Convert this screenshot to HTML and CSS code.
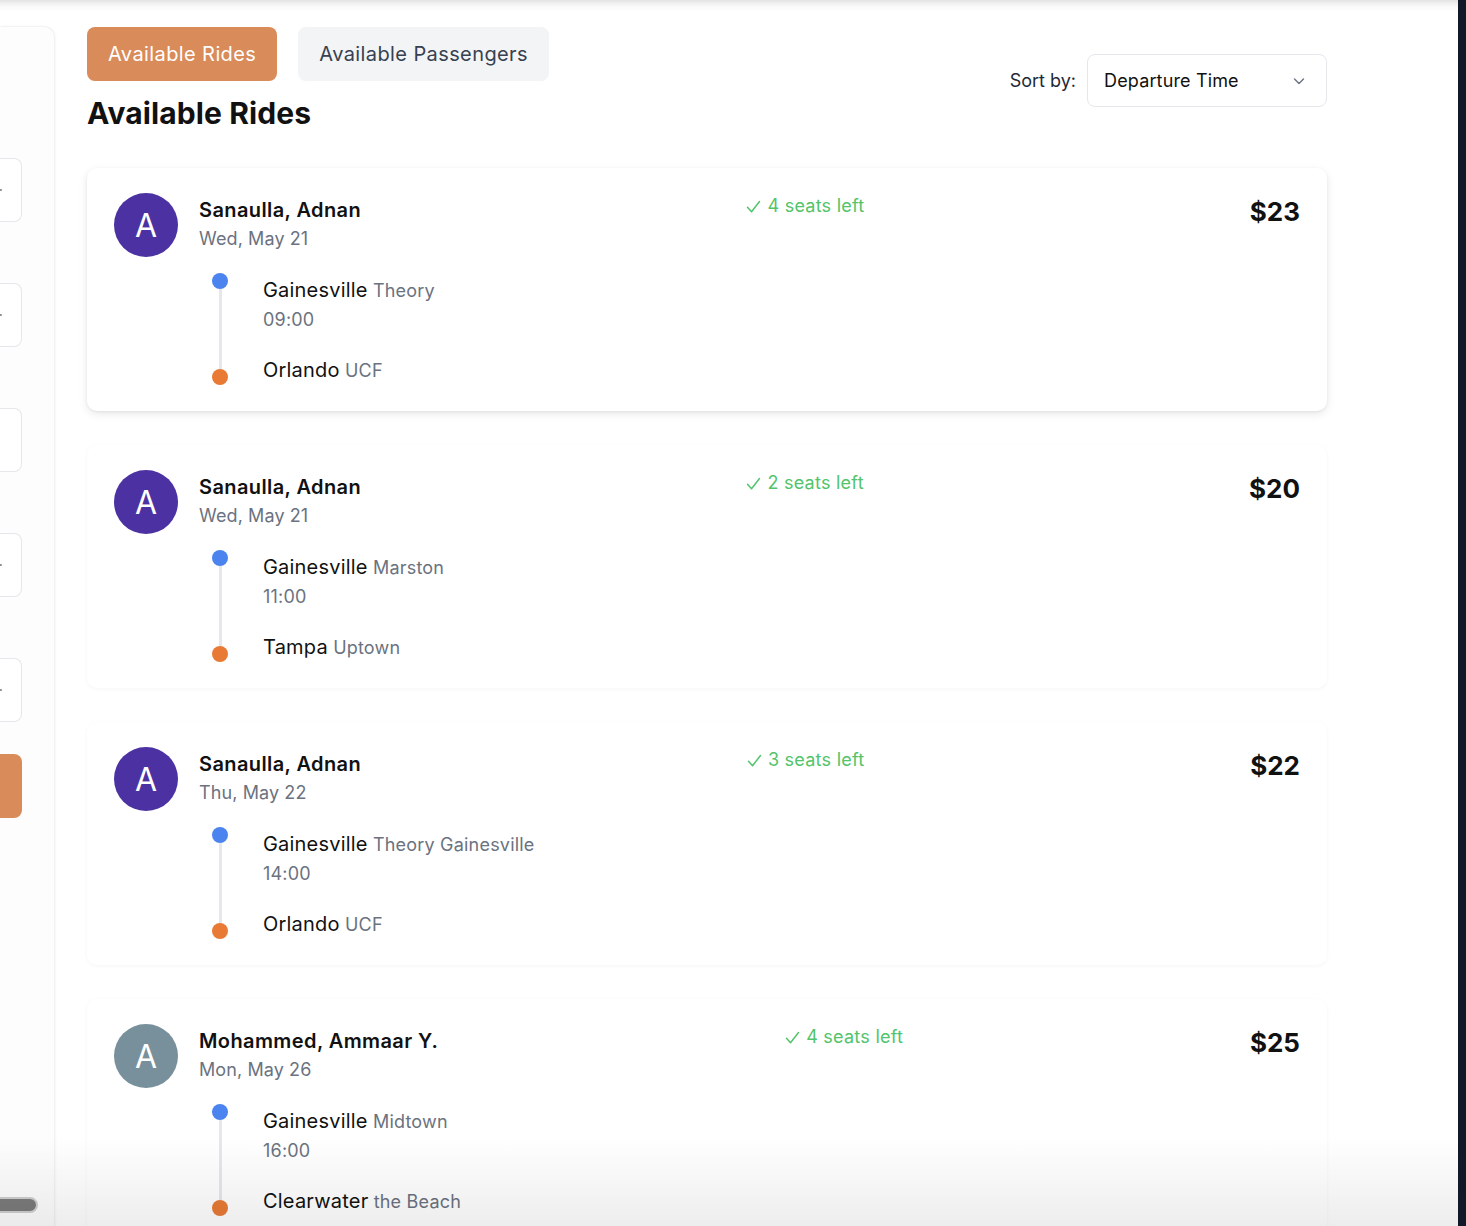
FILE: index.html
```html
<!DOCTYPE html>
<html lang="en">
<head>
<meta charset="utf-8">
<title>Available Rides</title>
<link rel="stylesheet" href="styles.css">
</head>
<body>
<div class="app">
  <div class="page">
    <aside class="sidebar">
      <div class="side-card">
        <div class="side-box first"><span class="tip"></span></div>
        <div class="side-box"><span class="tip"></span></div>
        <div class="side-box"></div>
        <div class="side-box"><span class="tip"></span></div>
        <div class="side-box"><span class="tip"></span></div>
        <div class="side-btn"></div>
      </div>
      <div class="hscroll"></div>
    </aside>

    <main class="main">
      <header class="head">
        <div class="head-left">
          <div class="tabs">
            <button class="tab active">Available Rides</button>
            <button class="tab">Available Passengers</button>
          </div>
          <h1 class="title">Available Rides</h1>
        </div>
        <div class="sort">
          <span class="sort-label">Sort by:</span>
          <div class="select">
            <span>Departure Time</span>
            <svg class="chev" width="14" height="14" viewBox="0 0 14 14"><path d="M2.5 5l4.5 4.5L11.5 5" fill="none" stroke="#6b7280" stroke-width="1.4" stroke-linecap="round" stroke-linejoin="round"/></svg>
          </div>
        </div>
      </header>

      <section class="list">
        <article class="card hover">
          <div class="card-top">
            <div class="driver">
              <div class="avatar purple">A</div>
              <div class="who">
                <div class="name">Sanaulla, Adnan</div>
                <div class="date">Wed, May 21</div>
              </div>
            </div>
            <div class="seats"><svg class="check" width="15" height="14" viewBox="0 0 15 14"><path d="M1.5 7.2l4 4.6L13.5 1.5" fill="none" stroke="#52c46b" stroke-width="1.5" stroke-linecap="round" stroke-linejoin="round"/></svg>4 seats left</div>
            <div class="price">$23</div>
          </div>
          <div class="route">
            <div class="line"><span class="dot start"></span><span class="bar"></span><span class="dot end"></span></div>
            <div class="stops">
              <div class="stop"><span class="city">Gainesville</span> <span class="spot">Theory</span></div>
              <div class="time">09:00</div>
              <div class="stop dest"><span class="city">Orlando</span> <span class="spot">UCF</span></div>
            </div>
          </div>
        </article>

        <article class="card">
          <div class="card-top">
            <div class="driver">
              <div class="avatar purple">A</div>
              <div class="who">
                <div class="name">Sanaulla, Adnan</div>
                <div class="date">Wed, May 21</div>
              </div>
            </div>
            <div class="seats"><svg class="check" width="15" height="14" viewBox="0 0 15 14"><path d="M1.5 7.2l4 4.6L13.5 1.5" fill="none" stroke="#52c46b" stroke-width="1.5" stroke-linecap="round" stroke-linejoin="round"/></svg>2 seats left</div>
            <div class="price">$20</div>
          </div>
          <div class="route">
            <div class="line"><span class="dot start"></span><span class="bar"></span><span class="dot end"></span></div>
            <div class="stops">
              <div class="stop"><span class="city">Gainesville</span> <span class="spot">Marston</span></div>
              <div class="time">11:00</div>
              <div class="stop dest"><span class="city">Tampa</span> <span class="spot">Uptown</span></div>
            </div>
          </div>
        </article>

        <article class="card">
          <div class="card-top">
            <div class="driver">
              <div class="avatar purple">A</div>
              <div class="who">
                <div class="name">Sanaulla, Adnan</div>
                <div class="date">Thu, May 22</div>
              </div>
            </div>
            <div class="seats"><svg class="check" width="15" height="14" viewBox="0 0 15 14"><path d="M1.5 7.2l4 4.6L13.5 1.5" fill="none" stroke="#52c46b" stroke-width="1.5" stroke-linecap="round" stroke-linejoin="round"/></svg>3 seats left</div>
            <div class="price">$22</div>
          </div>
          <div class="route">
            <div class="line"><span class="dot start"></span><span class="bar"></span><span class="dot end"></span></div>
            <div class="stops">
              <div class="stop"><span class="city">Gainesville</span> <span class="spot">Theory Gainesville</span></div>
              <div class="time">14:00</div>
              <div class="stop dest"><span class="city">Orlando</span> <span class="spot">UCF</span></div>
            </div>
          </div>
        </article>

        <article class="card">
          <div class="card-top">
            <div class="driver">
              <div class="avatar slate">A</div>
              <div class="who">
                <div class="name">Mohammed, Ammaar Y.</div>
                <div class="date">Mon, May 26</div>
              </div>
            </div>
            <div class="seats"><svg class="check" width="15" height="14" viewBox="0 0 15 14"><path d="M1.5 7.2l4 4.6L13.5 1.5" fill="none" stroke="#52c46b" stroke-width="1.5" stroke-linecap="round" stroke-linejoin="round"/></svg>4 seats left</div>
            <div class="price">$25</div>
          </div>
          <div class="route">
            <div class="line"><span class="dot start"></span><span class="bar"></span><span class="dot end"></span></div>
            <div class="stops">
              <div class="stop"><span class="city">Gainesville</span> <span class="spot">Midtown</span></div>
              <div class="time">16:00</div>
              <div class="stop dest"><span class="city">Clearwater</span> <span class="spot">the Beach</span></div>
            </div>
          </div>
        </article>
      </section>
    </main>
    <div class="fade"></div>
  </div>
  <div class="rail"></div>
</div>
</body>
</html>
```

FILE: styles.css
```css
* { box-sizing: border-box; }

html, body {
  margin: 0;
  padding: 0;
  height: 100%;
}

body {
  font-family: Inter, "Noto Sans", "Liberation Sans", sans-serif;
  color: #111111;
  background: #ffffff;
  overflow: hidden;
}

.app {
  display: flex;
  height: 100vh;
}

.page {
  position: relative;
  flex: 1;
  display: flex;
  overflow: hidden;
  padding-top: 27px;
  background: linear-gradient(to bottom, #e3e3e3 0px, #efefef 3px, #fafafa 7px, #ffffff 12px);
}

.rail {
  width: 8px;
  flex: none;
  background: #111827;
}

/* sidebar */
.sidebar {
  position: relative;
  width: 55px;
  flex: none;
}

.side-card {
  width: 54px;
  height: 1400px;
  background: #fdfdfd;
  border-radius: 0 10px 0 0;
  box-shadow: 1px 0 3px rgba(0, 0, 0, 0.07), 0 -1px 2px rgba(0, 0, 0, 0.03);
  padding-top: 131px;
  display: flex;
  flex-direction: column;
}

.side-box {
  width: 22px;
  height: 64px;
  border: 1px solid #e5e7eb;
  border-left: none;
  border-radius: 0 8px 8px 0;
  background: #ffffff;
  margin-bottom: 61px;
  display: flex;
  align-items: center;
}

.side-box .tip {
  width: 2px;
  height: 2px;
  background: #8a8f98;
  border-radius: 0 1px 1px 0;
}

.side-box:nth-child(5) { margin-bottom: 32px; }

.side-btn {
  width: 22px;
  height: 64px;
  background: #d98b59;
  border-radius: 0 8px 8px 0;
}

.hscroll {
  position: absolute;
  left: -10px;
  top: 1170px;
  width: 48px;
  height: 16px;
  background: #7b7b7b;
  border: 2px solid #cfcfcf;
  border-radius: 8px;
}

/* main */
.main {
  flex: none;
  width: 1272px;
  padding-left: 32px;
}

.head {
  display: flex;
  justify-content: space-between;
  align-items: flex-start;
}

.tabs {
  display: flex;
  gap: 21px;
}

.tab {
  font-family: inherit;
  font-size: 20px;
  line-height: 28px;
  padding: 13px 21px;
  border: none;
  border-radius: 8px;
  background: #f3f4f6;
  color: #374151;
  letter-spacing: 0.4px;
}

.tab.active {
  background: #d98b59;
  color: #ffffff;
}

.title {
  margin: 14px 0 0;
  font-size: 30px;
  line-height: 36px;
  font-weight: 700;
  letter-spacing: 0.1px;
}

.sort {
  margin-top: 27px;
  display: flex;
  align-items: center;
  gap: 11px;
}

.sort-label {
  font-size: 18px;
  line-height: 26px;
  color: #1f2937;
}

.select {
  width: 240px;
  height: 53px;
  border: 1px solid #e5e7eb;
  border-radius: 8px;
  padding: 0 20px 0 16px;
  display: flex;
  align-items: center;
  justify-content: space-between;
  font-size: 18px;
  color: #111111;
  letter-spacing: 0.15px;
}

/* cards */
.list {
  margin-top: 37px;
  display: flex;
  flex-direction: column;
  gap: 34px;
}

.card {
  width: 1240px;
  background: #ffffff;
  border-radius: 10px;
  padding: 25px 27px 26px;
  box-shadow: 0 1px 4px rgba(0, 0, 0, 0.04);
}

.card.hover {
  box-shadow: 0 3px 10px rgba(0, 0, 0, 0.09), 0 1px 3px rgba(0, 0, 0, 0.06);
}

.card-top {
  display: flex;
  justify-content: space-between;
  align-items: flex-start;
}

.driver {
  display: flex;
  align-items: center;
  gap: 21px;
}

.avatar {
  width: 64px;
  height: 64px;
  border-radius: 50%;
  color: #ffffff;
  display: flex;
  align-items: center;
  justify-content: center;
  font-size: 32px;
  font-weight: 400;
}

.avatar.purple { background: #4b31a2; }
.avatar.slate { background: #78909c; }

.who { margin-top: -2px; }

.name {
  font-size: 20px;
  line-height: 28px;
  font-weight: 600;
  color: #111111;
  letter-spacing: 0.4px;
}

.date {
  margin-top: 2px;
  font-size: 18px;
  line-height: 26px;
  color: #6b7280;
  letter-spacing: 0.1px;
}

.seats {
  display: flex;
  align-items: center;
  gap: 6px;
  font-size: 18px;
  line-height: 26px;
  color: #52c46b;
  letter-spacing: 0.25px;
}

.check {
  flex: none;
  margin-top: 1px;
}

.price {
  margin-top: 3px;
  font-size: 26px;
  line-height: 32px;
  font-weight: 700;
  color: #111111;
}

.route {
  margin: 16px 0 0 98px;
  display: flex;
  gap: 35px;
}

.line {
  width: 16px;
  display: flex;
  flex-direction: column;
  align-items: center;
}

.dot {
  width: 16px;
  height: 16px;
  border-radius: 50%;
  flex: none;
}

.dot.start { background: #4b84ee; }
.dot.end { background: #e87a36; }

.bar {
  flex: 1;
  width: 3px;
  background: #e5e7eb;
}

.stops { padding-top: 3px; }

.stop {
  font-size: 18px;
  line-height: 28px;
  color: #6b7280;
  letter-spacing: 0.2px;
}

.city {
  font-size: 20px;
  color: #111111;
}

.time {
  margin-top: 2px;
  font-size: 18px;
  line-height: 26px;
  color: #6b7280;
  letter-spacing: 0.2px;
}

.stop.dest { margin-top: 23px; }

.fade {
  position: absolute;
  left: 0;
  right: 0;
  bottom: 0;
  height: 90px;
  pointer-events: none;
  background: linear-gradient(to bottom, rgba(0, 0, 0, 0), rgba(0, 0, 0, 0.07));
}
```
